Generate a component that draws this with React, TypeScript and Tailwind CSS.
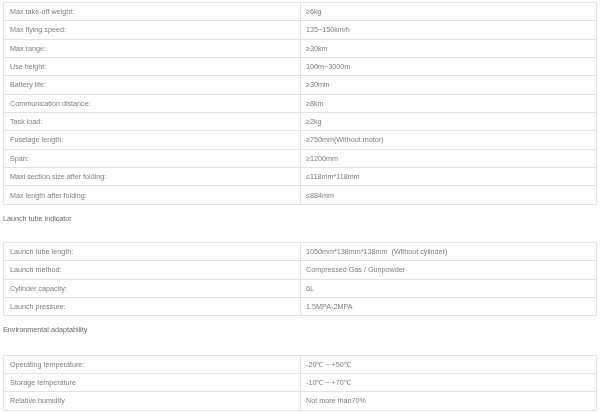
type Row = [string, string]

const FLIGHT: Row[] = [
  ['Max take-off weight:', '≥6kg'],
  ['Max flying speed:', '135~150km/h'],
  ['Max range:', '≥30km'],
  ['Use height:', '100m~3000m'],
  ['Battery life:', '≥30min'],
  ['Communication distance:', '≥8km'],
  ['Task load:', '≥2kg'],
  ['Fuselage length:', '≥750mm(Without motor)'],
  ['Span:', '≥1200mm'],
  ['Maxi section size after folding:', '≤118mm*118mm'],
  ['Max length after folding:', '≤884mm'],
]

const LAUNCH: Row[] = [
  ['Launch tube length:', '1050mm*138mm*138mm  (Without cylinder)'],
  ['Launch method:', 'Compressed Gas / Gunpowder'],
  ['Cylinder capacity:', '6L'],
  ['Launch pressure:', '1.5MPA-2MPA'],
]

const ENV: Row[] = [
  ['Operating temperature:', '-20℃ ~ +50℃'],
  ['Storage temperature', '-10℃ ~ +70℃'],
  ['Relative humidity', 'Not more than70%'],
]

function SpecTable({ rows }: { rows: Row[] }) {
  return (
    <table className="w-[594px] border-collapse border border-[#e2e2e2]">
      <tbody>
        {rows.map(([label, value]) => (
          <tr key={label} className="h-[18.35px]">
            <td className="w-[297px] border border-[#e2e2e2] pl-[6px] pr-1 py-0 leading-none whitespace-pre">{label}</td>
            <td className="border border-[#e2e2e2] pl-[5px] pr-1 py-0 leading-none whitespace-pre">{value}</td>
          </tr>
        ))}
      </tbody>
    </table>
  )
}

export default function App() {
  return (
    <div
      className="w-[600px] h-[412px] overflow-hidden bg-white pl-[3px] pt-[2px] text-[7.2px] text-[#7d7d7d] grayscale"
      style={{ fontFamily: '"Liberation Sans", Arial, sans-serif' }}
    >
      <SpecTable rows={FLIGHT} />
      <p className="pt-[10px] pb-[20px] leading-none text-[#666]">Launch tube indicator</p>
      <SpecTable rows={LAUNCH} />
      <p className="pt-[10px] pb-[21px] leading-none text-[#666]">Environmental adaptability</p>
      <SpecTable rows={ENV} />
    </div>
  )
}
